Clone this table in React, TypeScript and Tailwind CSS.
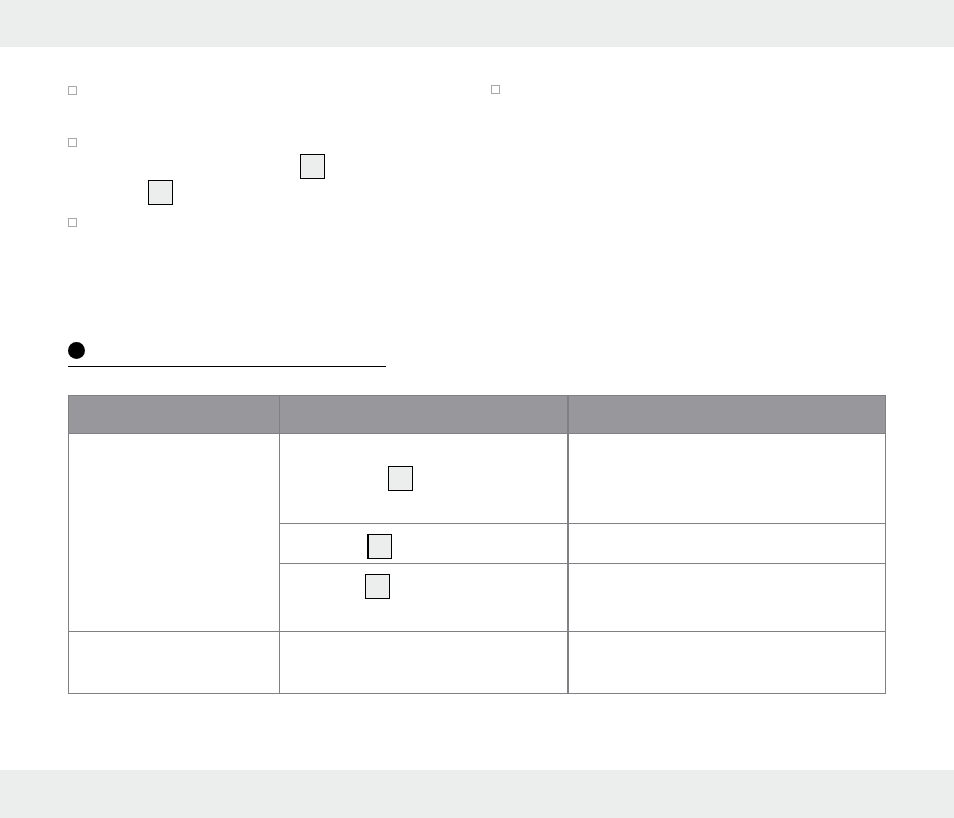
import React from 'react';

function Check() {
  return <span className="block w-[9px] h-[9px] border border-[#a9a9a9] bg-white" />;
}

function Key({ thick = false }: { thick?: boolean }) {
  return (
    <span
      className={`block w-[25px] h-[25px] bg-[#eceeed] border border-black ${thick ? 'border-l-2' : ''}`}
    />
  );
}

const cell = 'border border-[#808085] align-top p-0';

export default function App() {
  return (
    <div className="flex flex-col h-[818px] bg-white font-['Liberation_Sans',sans-serif]">
      <header className="h-[47px] bg-[#eceeed] shrink-0" />

      <main className="flex-1 px-[68px] pt-[39px]">
        <div className="grid grid-cols-[423px_1fr]">
          <div>
            <div className="h-[52px]">
              <Check />
            </div>
            <div className="h-[80px]">
              <div className="h-[16px]">
                <Check />
              </div>
              <div className="pl-[232px]">
                <Key />
              </div>
              <div className="pl-[80px] mt-px">
                <Key />
              </div>
            </div>
            <div>
              <Check />
            </div>
          </div>
          <div className="-mt-px">
            <Check />
          </div>
        </div>

        <section className="mt-[115px]">
          <div className="w-[318px] h-[25px] border-b border-black">
            <span className="block w-[17px] h-[17px] rounded-full bg-black" />
          </div>

          <table className="mt-[28px] w-[817px] table-fixed border-collapse">
            <colgroup>
              <col className="w-[211px]" />
              <col className="w-[288px]" />
              <col className="w-[318px]" />
            </colgroup>
            <thead>
              <tr className="h-[38px] bg-[#98979c]">
                <th className={cell} />
                <th className={`${cell} border-r-2`} />
                <th className={cell} />
              </tr>
            </thead>
            <tbody>
              <tr className="h-[90px]">
                <td className={cell} rowSpan={3} />
                <td className={`${cell} border-r-2`}>
                  <div className="pt-[32px] pl-[108px]">
                    <Key />
                  </div>
                </td>
                <td className={cell} />
              </tr>
              <tr className="h-[40px]">
                <td className={`${cell} border-r-2`}>
                  <div className="pt-[10px] pl-[87px]">
                    <Key thick />
                  </div>
                </td>
                <td className={cell} />
              </tr>
              <tr className="h-[68px]">
                <td className={`${cell} border-r-2`}>
                  <div className="pt-[10px] pl-[85px]">
                    <Key />
                  </div>
                </td>
                <td className={cell} />
              </tr>
              <tr className="h-[62px]">
                <td className={cell} />
                <td className={`${cell} border-r-2`} />
                <td className={cell} />
              </tr>
            </tbody>
          </table>
        </section>
      </main>

      <footer className="h-[48px] bg-[#eceeed] shrink-0" />
    </div>
  );
}
